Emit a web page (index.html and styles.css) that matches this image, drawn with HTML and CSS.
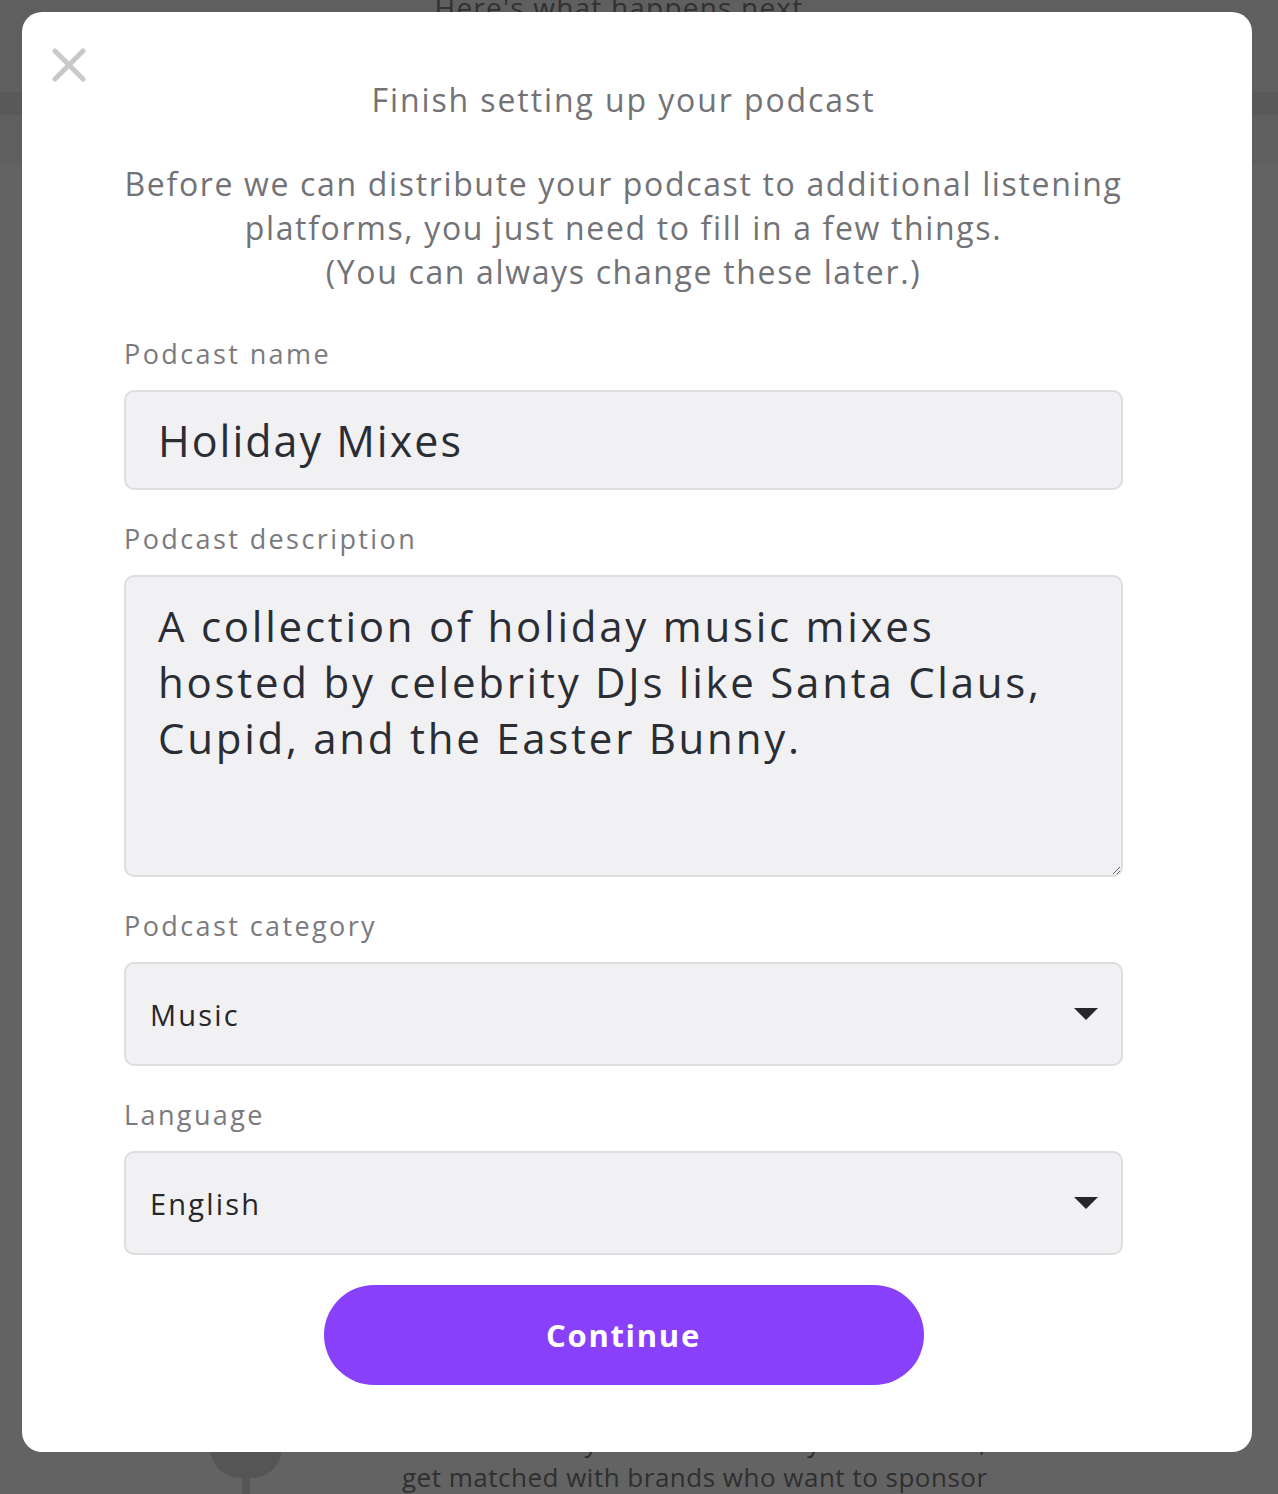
FILE: index.html
```html
<!DOCTYPE html>
<html lang="en">
<head>
<meta charset="utf-8">
<title>Finish setting up your podcast</title>
<link rel="stylesheet" href="styles.css">
</head>
<body>
<div class="page">
  <header class="page-header">
    <h2 class="page-title">Here's what happens next</h2>
  </header>
  <div class="page-band"></div>
  <div class="page-spacer"></div>
  <div class="step">
    <div class="step-marker">
      <div class="step-dot"></div>
      <div class="step-line"></div>
    </div>
    <div class="step-text">
      <p>Enable monthly donations from your listeners, or</p>
      <p>get matched with brands who want to sponsor</p>
    </div>
  </div>
</div>

<div class="overlay"></div>

<div class="modal" role="dialog" aria-labelledby="modal-title">
  <button class="close" aria-label="Close">
    <svg width="34" height="34" viewBox="0 0 34 34"><path d="M3 3 L31 31 M31 3 L3 31" stroke="#c9c9c9" stroke-width="5" stroke-linecap="round" fill="none"/></svg>
  </button>
  <div class="modal-body">
    <h1 class="modal-title" id="modal-title">Finish setting up your podcast</h1>
    <p class="modal-desc">Before we can distribute your podcast to additional listening platforms, you just need to fill in a few things.<br>(You can always change these later.)</p>

    <form class="form">
      <label class="field-label" for="name">Podcast name</label>
      <input class="field-input" id="name" type="text" value="Holiday Mixes">

      <label class="field-label gap" for="desc">Podcast description</label>
      <textarea class="field-textarea" id="desc">A collection of holiday music mixes hosted by celebrity DJs like Santa Claus, Cupid, and the Easter Bunny.</textarea>

      <label class="field-label gap" for="cat">Podcast category</label>
      <div class="select-wrap">
        <select class="field-select" id="cat"><option>Music</option></select>
        <svg class="select-arrow" width="24" height="12" viewBox="0 0 24 12"><path d="M0 0 H24 L12 12 Z" fill="#26272b"/></svg>
      </div>

      <label class="field-label gap" for="lang">Language</label>
      <div class="select-wrap">
        <select class="field-select" id="lang"><option>English</option></select>
        <svg class="select-arrow" width="24" height="12" viewBox="0 0 24 12"><path d="M0 0 H24 L12 12 Z" fill="#26272b"/></svg>
      </div>

      <div class="actions">
        <button type="button" class="btn-primary">Continue</button>
      </div>
    </form>
  </div>
</div>
</body>
</html>
```

FILE: styles.css
```css
* { box-sizing: border-box; }

html, body {
  margin: 0;
  padding: 0;
}

body {
  width: 1278px;
  height: 1494px;
  overflow: hidden;
  background: #ffffff;
  font-family: "Open Sans", "Noto Sans", sans-serif;
  position: relative;
}

/* underlying page */
.page {
  height: 1494px;
  display: flex;
  flex-direction: column;
  background: #ffffff;
}

.page-header {
  height: 92px;
  background: #f4f4f8;
  padding-right: 40px;
}

.page-title {
  margin: -11px 0 0;
  text-align: center;
  font-size: 28px;
  line-height: 36px;
  font-weight: 400;
  letter-spacing: 1.2px;
  color: #7e7e7e;
}

.page-band {
  height: 73px;
  background: #f4f4f8;
  border-top: 23px solid #e4e4e8;
}

.page-spacer { flex: 1; }

.step {
  display: flex;
  gap: 120px;
  padding-left: 210px;
  height: 46px;
}

.step-marker {
  width: 72px;
  display: flex;
  flex-direction: column;
  align-items: center;
}

.step-dot {
  width: 72px;
  height: 30px;
  border-radius: 0 0 36px 36px;
  background: #dadade;
}

.step-line {
  width: 8px;
  flex: 1;
  background: #dadade;
}

.step-text p {
  margin: 0;
  font-size: 26px;
  line-height: 35px;
  letter-spacing: 0.5px;
  color: #7a7a7a;
  white-space: nowrap;
}

.step-text p:first-child { margin-top: -23px; }

.overlay {
  position: fixed;
  inset: 0;
  background: rgba(0, 0, 0, 0.61);
}

/* modal */
.modal {
  position: absolute;
  left: 22px;
  top: 12px;
  width: 1230px;
  height: 1440px;
  background: #ffffff;
  border-radius: 20px;
}

.close {
  position: absolute;
  left: 30px;
  top: 36px;
  width: 34px;
  height: 34px;
  padding: 0;
  border: 0;
  background: none;
  cursor: pointer;
}

.close svg { display: block; }

.modal-body {
  padding: 66px 129px 0 102px;
}

.modal-title {
  margin: 0;
  text-align: center;
  font-size: 32px;
  line-height: 44px;
  font-weight: 400;
  letter-spacing: 1.9px;
  color: #727277;
}

.modal-desc {
  margin: 40px 0 0;
  text-align: center;
  font-size: 32px;
  line-height: 44px;
  font-weight: 400;
  letter-spacing: 1.65px;
  color: #727277;
}

.form {
  display: flex;
  flex-direction: column;
  margin-top: 42px;
}

.field-label {
  display: block;
  font-size: 27px;
  line-height: 36px;
  letter-spacing: 2.4px;
  color: #7a7a7e;
  margin-bottom: 18px;
}

.field-label.gap { margin-top: 31px; }

.field-input,
.field-textarea,
.field-select {
  width: 100%;
  font-family: "Open Sans", "Noto Sans", sans-serif;
  background: #f1f1f4;
  border: 2px solid #dedee1;
  border-radius: 10px;
  color: #2a2d34;
  outline: none;
  margin: 0;
}

.field-input {
  height: 100px;
  padding: 0 32px;
  font-size: 43px;
  letter-spacing: 2px;
}

.field-textarea {
  height: 302px;
  padding: 21px 63px 21px 32px;
  font-size: 42px;
  line-height: 56px;
  letter-spacing: 2.75px;
  resize: vertical;
  display: block;
}

.select-wrap {
  position: relative;
}

.field-select {
  -webkit-appearance: none;
  appearance: none;
  height: 104px;
  padding: 0 24px;
  font-size: 29px;
  letter-spacing: 2.2px;
  color: #26272b;
  display: block;
}

.select-arrow {
  position: absolute;
  right: 25px;
  top: 46px;
  pointer-events: none;
}

.actions {
  display: flex;
  justify-content: center;
  margin-top: 30px;
}

.btn-primary {
  width: 600px;
  height: 100px;
  border: 0;
  border-radius: 50px;
  background: #8940fa;
  color: #ffffff;
  font-family: "Open Sans", "Noto Sans", sans-serif;
  font-size: 31px;
  font-weight: 700;
  letter-spacing: 1.7px;
  cursor: pointer;
}
```
